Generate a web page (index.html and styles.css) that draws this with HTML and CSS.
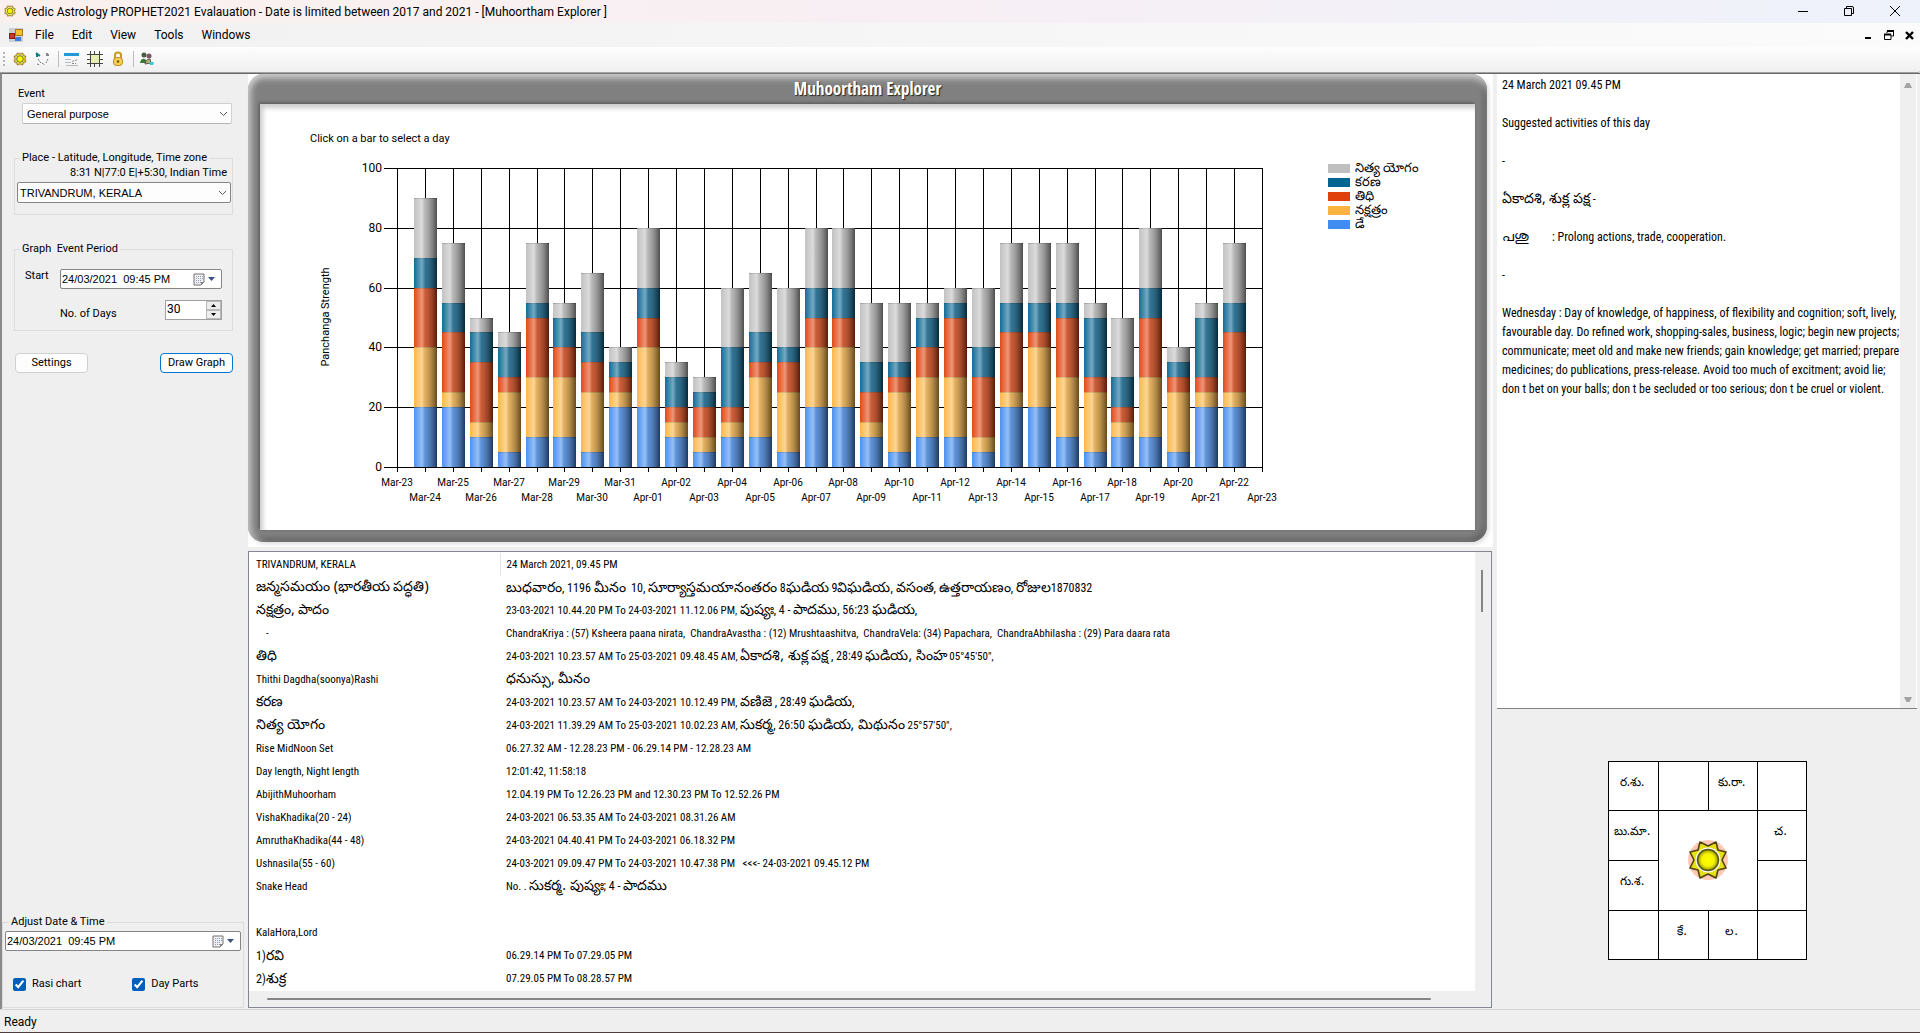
FILE: index.html
```html
<!DOCTYPE html>
<html lang="en">
<head>
<meta charset="utf-8">
<title>Vedic Astrology PROPHET2021 Evalauation</title>
<link rel="stylesheet" href="styles.css">
</head>
<body>
<svg class="defs" width="0" height="0" aria-hidden="true">
  <defs>
    <radialGradient id="sunCore"><stop offset="0" stop-color="#ffff00"/><stop offset="0.6" stop-color="#f6f200"/><stop offset="1" stop-color="#8c8c00"/></radialGradient>
    <symbol id="sun" viewBox="0 0 48 48">
      <circle cx="24" cy="24" r="20" fill="#fdc9b4"/>
      <path d="M16 6 L24 10 L32 6 L34 14 L42 16 L38 24 L42 32 L34 34 L32 42 L24 38 L16 42 L14 34 L6 32 L10 24 L6 16 L14 14 Z" fill="#e6df14" stroke="#4e4410" stroke-width="1.6" stroke-linejoin="round"/>
      <circle cx="24" cy="24" r="12.5" fill="#fff"/>
      <circle cx="24" cy="24" r="10.5" fill="url(#sunCore)" stroke="#57570a" stroke-width="1.5"/>
    </symbol>
    <symbol id="calendar" viewBox="0 0 12 13">
      <path d="M1 1H11V9L8 12H1Z" fill="#eef0f5" stroke="#77706c"/>
      <path d="M8 12V9H11Z" fill="#8a8482"/>
      <path d="M3 3.500H10M3 5.500H10M3 7.500H9M3 9.500H8" stroke="#8f9bb5" stroke-dasharray="1 1"/>
    </symbol>
    <symbol id="chevron" viewBox="0 0 9 6"><path d="M1 1 L4.500 4.500 L8 1" fill="none" stroke="#555"/></symbol>
  </defs>
</svg>

<header>
  <div class="titlebar">
    <svg width="14" height="14"><use href="#sun"/></svg>
    <h1>Vedic Astrology PROPHET2021 Evalauation - Date is limited between 2017 and 2021 - [Muhoortham Explorer ]</h1>
    <div class="window-buttons">
      <button type="button" aria-label="Minimize"><svg width="12" height="12"><path d="M1 6.500H11" stroke="#000"/></svg></button>
      <button type="button" aria-label="Restore"><svg width="12" height="12"><path d="M1.500 3.500H8.500V10.500H1.500ZM3.500 3V1.500H9Q10.500 1.500 10.500 3V8.500H9" fill="none" stroke="#000"/></svg></button>
      <button type="button" aria-label="Close"><svg width="12" height="12"><path d="M1 1L11 11M11 1L1 11" stroke="#000"/></svg></button>
    </div>
  </div>
  <nav class="menubar">
    <svg width="14" height="14"><rect width="14" height="14" fill="#c9cdd4"/><rect x="0.500" y="5.500" width="5" height="5" fill="#c23a2b" stroke="#8b1a10"/><rect x="6.500" y="1.500" width="7" height="6" fill="#f7c02e" stroke="#a8781a"/><rect x="6" y="9" width="6" height="4" fill="#3d7be0"/></svg>
    <button type="button">File</button>
    <button type="button">Edit</button>
    <button type="button">View</button>
    <button type="button">Tools</button>
    <button type="button">Windows</button>
    <div class="child-buttons">
      <button type="button" aria-label="Minimize child"><svg width="9" height="9"><rect x="1" y="6" width="6" height="2"/></svg></button>
      <button type="button" aria-label="Restore child"><svg width="10" height="10"><path d="M3 3V1.500H9.500V6H7.500M0.500 4.500H7V9.500H0.500Z" fill="none" stroke="#000"/><path d="M3 1H10M0 4.500H7" stroke="#000" stroke-width="2"/></svg></button>
      <button type="button" aria-label="Close child"><svg width="9" height="9"><path d="M1 1L8 8M8 1L1 8" stroke="#000" stroke-width="2.400"/></svg></button>
    </div>
  </nav>
  <div class="toolbar">
    <span class="grip"></span>
    <button type="button" aria-label="Chart"><svg width="16" height="16"><use href="#sun"/></svg></button>
    <button type="button" aria-label="Match"><svg width="16" height="16"><path d="M1 2L5 5M2 2V6" stroke="#0d7d7d" stroke-width="2"/><path d="M12 2V5M14 4H11" stroke="#888" stroke-width="2"/><path d="M3 8L6 12M13 8L11 12M2 13L5 14M7 12L10 14" fill="none" stroke="#777" stroke-dasharray="2 1"/></svg></button>
    <span class="sep"></span>
    <button type="button" aria-label="List"><svg width="16" height="16"><rect y="2" width="15" height="3" fill="#1e9ad6"/><path d="M1 8.500H7M1 11.500H7M2 14.500H14" stroke="#b6bcc2"/><path d="M8 10.500L14 8.500M8 12.500H12" stroke="#888" stroke-dasharray="2 1"/></svg></button>
    <button type="button" aria-label="Grid"><svg width="16" height="16"><rect x="4" y="4" width="8" height="8" fill="#e6efae"/><path d="M3.500 0V16M7.500 0V4M7.500 12V16M12.500 0V16M0 3.500H16M0 8.500H4M12 8.500H16M0 12.500H16" stroke="#444"/></svg></button>
    <button type="button" aria-label="Lock"><svg width="16" height="16"><path d="M5 8V4Q5 1.500 8 1.500T11 4V8" fill="none" stroke="#c99a1e" stroke-width="2"/><rect x="3.500" y="6.500" width="9" height="8" rx="3" fill="#f5cd55" stroke="#b98a1c"/><circle cx="8" cy="10.500" r="1.300" fill="#7a5506"/></svg></button>
    <span class="sep"></span>
    <button type="button" aria-label="People"><svg width="16" height="16"><circle cx="5" cy="4" r="2.500" fill="#4b5a48"/><path d="M1 12Q2 7 6 8L9 12Z" fill="#357a35"/><circle cx="10" cy="5" r="2.500" fill="#7a5560"/><path d="M6 13Q7 8 11 8L12 12Z" fill="#b9b06a" stroke="#555"/><path d="M10 11H15L14 14H11Z" fill="#38c6d6"/></svg></button>
  </div>
</header>

<main>
  <form class="sidebar">
    <label class="event-label" for="event">Event</label>
    <div class="picker event">
      <select id="event"><option>General purpose</option></select>
      <svg width="9" height="6"><use href="#chevron"/></svg>
    </div>

    <fieldset class="group place">
      <legend>Place - Latitude, Longitude, Time zone</legend>
      <label for="place">8:31 N|77:0 E|+5:30, Indian Time</label>
      <div class="picker strong">
        <select id="place"><option>TRIVANDRUM, KERALA</option></select>
        <svg width="9" height="6"><use href="#chevron"/></svg>
      </div>
    </fieldset>

    <fieldset class="group period">
      <legend>Graph&nbsp; Event Period</legend>
      <div class="period-fields">
        <div class="line">
          <label for="start">Start</label>
          <div class="date">
            <input id="start" type="text" value="24/03/2021  09:45 PM">
            <svg width="12" height="13"><use href="#calendar"/></svg>
            <svg width="7" height="4"><path d="M0 0H7L3.500 4Z" fill="#3c5088"/></svg>
          </div>
        </div>
        <div class="line days">
          <label for="days">No. of Days</label>
          <div class="spinner">
            <input id="days" type="text" value="30">
            <div class="arrows">
              <button type="button" aria-label="More"><svg width="5" height="3"><path d="M0 3H5L2.500 0Z"/></svg></button>
              <button type="button" aria-label="Less"><svg width="5" height="3"><path d="M0 0H5L2.500 3Z"/></svg></button>
            </div>
          </div>
        </div>
      </div>
    </fieldset>

    <div class="actions">
      <button type="button">Settings</button>
      <button type="button" class="primary">Draw Graph</button>
    </div>

    <fieldset class="group adjust">
      <legend>Adjust Date &amp; Time</legend>
      <div class="date">
        <input type="text" value="24/03/2021  09:45 PM" aria-label="Adjust date and time">
        <svg width="12" height="13"><use href="#calendar"/></svg>
        <svg width="7" height="4"><path d="M0 0H7L3.500 4Z" fill="#3c5088"/></svg>
      </div>
      <div class="checks">
        <label><input type="checkbox" checked>Rasi chart</label>
        <label><input type="checkbox" checked>Day Parts</label>
      </div>
    </fieldset>
  </form>

  <section class="center">
    <div class="chart-wrap">
      <div class="chart-frame">
        <h2>Muhoortham Explorer</h2>
        <div class="chart-body"><svg id="chart" viewBox="0 0 1215 426" role="img" aria-label="Panchanga Strength"></svg></div>
      </div>
    </div>
    <div class="grid-box">
      <div class="rows">
        <table>
          <tr><td>TRIVANDRUM, KERALA</td><td>24 March 2021, 09.45 PM</td></tr>
          <tr><td><span class="te">జన్మసమయం (భారతీయ పద్ధతి)</span></td><td class="mix"><span class="te">బుధవారం</span>, 1196 <span class="te">మీనం</span>&nbsp; 10, <span class="te">సూర్యాస్తమయానంతరం</span> 8<span class="te">ఘడియ</span> 9<span class="te">విఘడియ</span>, <span class="te">వసంత</span>, <span class="te">ఉత్తరాయణం</span>, <span class="te">రోజుల</span>1870832</td></tr>
          <tr><td><span class="te">నక్షత్రం, పాదం</span></td><td>23-03-2021 10.44.20 PM To 24-03-2021 11.12.06 PM, <span class="mix"><span class="te">పుష్యః</span>, 4 - <span class="te">పాదము</span>, 56:23 <span class="te">ఘడియ</span>,</span></td></tr>
          <tr><td>&nbsp; &nbsp; -</td><td>ChandraKriya : (57) Ksheera paana nirata,&nbsp; ChandraAvastha : (12) Mrushtaashitva,&nbsp; ChandraVela: (34) Papachara,&nbsp; ChandraAbhilasha : (29) Para daara rata</td></tr>
          <tr><td><span class="te">తిధి</span></td><td>24-03-2021 10.23.57 AM To 25-03-2021 09.48.45 AM, <span class="mix"><span class="te">ఏకాదశి, శుక్ల పక్ష</span> , 28:49 <span class="te">ఘడియ, సింహ</span></span> 05°45'50",</td></tr>
          <tr><td>Thithi Dagdha(soonya)Rashi</td><td><span class="te">ధనుస్సు, మీనం</span></td></tr>
          <tr><td><span class="te">కరణ</span></td><td>24-03-2021 10.23.57 AM To 24-03-2021 10.12.49 PM, <span class="mix"><span class="te">వణిజె</span> , 28:49 <span class="te">ఘడియ</span>,</span></td></tr>
          <tr><td><span class="te">నిత్య యోగం</span></td><td>24-03-2021 11.39.29 AM To 25-03-2021 10.02.23 AM, <span class="mix"><span class="te">సుకర్మ</span>, 26:50 <span class="te">ఘడియ, మిథునం</span></span> 25°57'50",</td></tr>
          <tr><td>Rise MidNoon Set</td><td>06.27.32 AM - 12.28.23 PM - 06.29.14 PM - 12.28.23 AM</td></tr>
          <tr><td>Day length, Night length</td><td>12:01:42, 11:58:18</td></tr>
          <tr><td>AbijithMuhoorham</td><td>12.04.19 PM To 12.26.23 PM and 12.30.23 PM To 12.52.26 PM</td></tr>
          <tr><td>VishaKhadika(20 - 24)</td><td>24-03-2021 06.53.35 AM To 24-03-2021 08.31.26 AM</td></tr>
          <tr><td>AmruthaKhadika(44 - 48)</td><td>24-03-2021 04.40.41 PM To 24-03-2021 06.18.32 PM</td></tr>
          <tr><td>Ushnasila(55 - 60)</td><td>24-03-2021 09.09.47 PM To 24-03-2021 10.47.38 PM&nbsp;&nbsp; &lt;&lt;&lt;- 24-03-2021 09.45.12 PM</td></tr>
          <tr><td>Snake Head</td><td>No. . <span class="mix"><span class="te">సుకర్మ. పుష్యః</span>; 4 - <span class="te">పాదము</span></span></td></tr>
          <tr><td></td><td></td></tr>
          <tr><td>KalaHora,Lord</td><td></td></tr>
          <tr><td class="mix">1)<span class="te">రవి</span></td><td>06.29.14 PM To 07.29.05 PM</td></tr>
          <tr><td class="mix">2)<span class="te">శుక్ర</span></td><td>07.29.05 PM To 08.28.57 PM</td></tr>
        </table>
        <div class="vbar"><span></span></div>
      </div>
      <div class="hbar"><span></span></div>
    </div>
  </section>

  <aside class="right">
    <div class="notes">
      <div class="notes-text">
        <p>24 March 2021 09.45 PM</p>
        <p>Suggested activities of this day</p>
        <p>-</p>
        <p><span class="te">ఏకాదశి, శుక్ల పక్ష</span> -</p>
        <p><span class="te ml">പശു</span>: Prolong actions, trade, cooperation.</p>
        <p>-</p>
        <p>Wednesday : Day of knowledge, of happiness, of flexibility and cognition; soft, lively,<br>favourable day. Do refined work, shopping-sales, business, logic; begin new projects;<br>communicate; meet old and make new friends; gain knowledge; get married; prepare<br>medicines; do publications, press-release. Avoid too much of excitment; avoid lie;<br>don t bet on your balls; don t be secluded or too serious; don t be cruel or violent.</p>
      </div>
      <div class="notes-bar">
        <svg width="8" height="6"><path d="M0 6L2.500 1H5.500L8 6Z" fill="#a3a3a3"/></svg>
        <svg width="8" height="6"><path d="M0 0L2.500 5H5.500L8 0Z" fill="#a3a3a3"/></svg>
      </div>
    </div>
    <div class="rasi-area">
      <div class="rasi">
        <div>ర.శు.</div><div></div><div>కు.రా.</div><div></div>
        <div>బు.మా.</div><div class="hub"><svg width="48" height="48"><use href="#sun"/></svg></div><div>చ.</div>
        <div>గు.శ.</div><div></div>
        <div></div><div>కే.</div><div>ల.</div><div></div>
      </div>
    </div>
  </aside>
</main>

<footer>Ready</footer>
<script src="chart.js"></script>
</body>
</html>
```
FILE: chart.js
```js
// Points per day, bottom to top: weekday, nakshatra, tithi, karana, yoga.
const days = [
  [20,20,20,10,20],[20,5,20,10,20],[10,5,20,10,5],[5,20,5,10,5],[10,20,20,5,20],
  [10,20,10,10,5],[5,20,10,10,20],[20,5,5,5,5],[20,20,10,10,20],[10,5,5,10,5],
  [5,5,10,5,5],[10,5,5,20,20],[10,20,5,10,20],[5,20,10,5,20],[20,20,10,10,20],
  [20,20,10,10,20],[10,5,10,10,20],[5,20,5,5,20],[10,20,10,10,5],[10,20,20,5,5],
  [5,5,20,10,20],[20,5,20,10,20],[20,20,5,10,20],[10,20,20,5,20],[5,20,5,20,5],
  [10,5,5,10,20],[10,20,20,10,20],[5,20,5,5,5],[20,5,5,20,5],[20,5,20,10,20]
];
const series = [
  { name: "డే", color: "#418cf0" },
  { name: "నక్షత్రం", color: "#fcb441" },
  { name: "తిధి", color: "#e0400a" },
  { name: "కరణ", color: "#056492" },
  { name: "నిత్య యోగం", color: "#bfbfbf" }
];
const left = 137, top0 = 64, base = 363, step = 27.9;
const yOf = v => Math.round(base - v * (base - top0) / 100);
const xOf = i => Math.round(left + i * step);
let out = '<defs><linearGradient id="shade"><stop offset="0" stop-color="#fff" stop-opacity="0.05"/>' +
  '<stop offset="0.35" stop-color="#fff" stop-opacity="0.45"/><stop offset="0.5" stop-color="#999" stop-opacity="0.3"/>' +
  '<stop offset="1" stop-color="#000" stop-opacity="0.6"/></linearGradient></defs>';

for (let v = 0; v <= 100; v += 20) {
  out += `<rect x="124" y="${yOf(v)}" width="${xOf(31) - 123}" height="1"/>` +
    `<text class="y-label" x="122" y="${yOf(v) + 4}">${v}</text>`;
}
for (let i = 0; i <= 31; i++) {
  const label = i < 9 ? "Mar-" + (23 + i) : "Apr-" + String(i - 8).padStart(2, "0");
  out += `<rect x="${xOf(i)}" y="${top0}" width="1" height="${base - top0 + 5}"/>` +
    `<text class="x-label" x="${xOf(i)}" y="${i % 2 ? 397 : 382}">${label}</text>`;
}
days.forEach((parts, d) => {
  const x = xOf(d + 1) - 11;
  let sum = 0;
  parts.forEach((p, s) => {
    const y = yOf(sum + p), h = yOf(sum) - y;
    out += `<rect x="${x}" y="${y}" width="23" height="${h}" fill="${series[s].color}"/>` +
      `<rect x="${x}" y="${y}" width="23" height="1" fill="#000" opacity="0.2"/>`;
    sum += p;
  });
  out += `<rect x="${x}" y="${yOf(sum)}" width="23" height="${base - yOf(sum)}" fill="url(#shade)"/>`;
});
series.slice().reverse().forEach((s, i) => {
  const y = 60 + i * 14;
  out += `<rect x="1068" y="${y}" width="22" height="9" fill="${s.color}"/>` +
    `<text class="key" x="1095" y="${y + 8}">${s.name}</text>`;
});
out += '<text class="note" x="50" y="38">Click on a bar to select a day</text>' +
  '<text class="axis" transform="rotate(-90 69 213)" x="69" y="213">Panchanga Strength</text>';
document.getElementById("chart").innerHTML = out;
```
FILE: styles.css
```css
* { box-sizing: border-box; }
body { margin: 0; height: 100vh; min-height: 900px; display: flex; flex-direction: column; background: #efefef; color: #000; font: 11px/14px Roboto, "Noto Sans", sans-serif; }
button, input, select { font: inherit; color: inherit; margin: 0; padding: 0; }
svg { display: block; flex: none; }
.defs { position: absolute; }

.titlebar { display: flex; align-items: center; gap: 7px; height: 23px; padding: 0 19px 2px 3px; background: linear-gradient(90deg, #faf1ee, #f8eff4 45%, #eef2fb); }
.titlebar h1 { margin: 0; padding-top: 2px; font-size: 12px; font-weight: 400; }
.window-buttons { display: flex; gap: 34px; margin-left: auto; }
.titlebar button, .menubar button, .toolbar button { border: 0; background: none; }
.menubar { display: flex; align-items: center; height: 24px; padding: 0 6px 0 9px; font-size: 12px; background: linear-gradient(90deg, #f1f1f1, #fbfbfb); }
.menubar > button { margin-left: 18px; }
.menubar > svg + button { margin-left: 12px; }
.menubar .child-buttons { display: flex; align-items: center; gap: 11px; margin-left: auto; }
.toolbar { display: flex; align-items: center; height: 26px; gap: 7px; padding: 0 2px 1px 3px; background: linear-gradient(#fdfdfd, #f0f0f0); border-bottom: 1px solid #a0a0a0; border-radius: 0 0 2px 0; }
.grip { width: 2px; height: 15px; background: repeating-linear-gradient(#b5b5b5 0 2px, transparent 2px 4px); }
.sep { width: 1px; height: 16px; margin: 0 -2px 0 0; background: #bdbdbd; }

main { flex: 1; min-height: 0; display: flex; border-top: 1px solid #696969; border-left: 2px solid #8a8a8a; }

.sidebar { flex: 0 0 246px; display: flex; flex-direction: column; padding: 13px 4px 1px 0; }
.event-label { margin: 0 0 2px 16px; }
.picker { position: relative; height: 21px; font-family: "Liberation Sans", sans-serif; }
.picker select { width: 100%; height: 100%; padding: 0 4px; border: 1px solid #d0d0d0; border-bottom-color: #b5b5b5; border-radius: 2px; background: #fdfdfd; appearance: none; }
.picker svg { position: absolute; right: 4px; top: 8px; pointer-events: none; }
.picker.strong select { padding: 0 2px; border-color: #858585; }
.event { margin: 0 12px 0 20px; }
.group { min-width: 0; margin: 0; padding: 0; border: 1px solid #dcdcdc; }
.group legend { padding: 0 2px; }
.place { margin: 27px 11px 0 12px; padding: 1px 1px 11px 2px; }
.place legend { margin-left: 3px; }
.place label { display: block; margin: 0 4px 2px; text-align: right; }
.period { margin: 27px 11px 0 12px; }
.period legend { margin-left: 5px; }
.period-fields { padding: 13px 10px 9px; }
.line { display: flex; justify-content: space-between; }
.days { padding-left: 35px; margin-top: 11px; }
.days label { padding-top: 7px; }
.date { display: flex; align-items: center; gap: 3px; height: 20px; padding-right: 6px; border: 1px solid #858585; border-radius: 2px; background: #fff; font-family: "Liberation Sans", sans-serif; }
.line .date { width: 162px; }
.date input { flex: 1; min-width: 0; padding-left: 1px; border: 0; background: none; white-space: pre; }
.spinner { display: flex; width: 57px; height: 20px; border: 1px solid #a0a0a0; background: #fff; }
.spinner input { flex: 1; min-width: 0; padding: 0 1px 3px; border: 0; background: none; font-size: 12px; }
.arrows { display: grid; width: 15px; background: #fff; }
.arrows button { display: grid; place-items: center; border: 1px solid #b8b8b8; background: #ededed; }
.actions { display: flex; justify-content: space-between; margin: 22px 11px 0 13px; }
.actions button { width: 73px; height: 20px; border: 1px solid #d0d0d0; border-radius: 4px; background: #fdfdfd; }
.actions .primary { border-color: #0078d4; }
.adjust { margin-top: auto; padding: 2px 2px 16px; }
.adjust legend { margin-left: 4px; }
.checks { display: flex; gap: 51px; padding: 26px 8px 0; }
.checks label { display: flex; align-items: center; gap: 6px; }
.checks input { width: 13px; height: 13px; accent-color: #005fb8; }

.center { flex: 1; min-width: 0; display: flex; flex-direction: column; }
.chart-wrap { padding: 0 6px 5px 0; background: #fff; }
.chart-frame { padding: 0 12px 12px; border-radius: 16px; background: #808080; box-shadow: inset 0 7px 7px -3px #d0d0d0, inset 7px 0 7px -4px #c4c4c4, inset -4px -4px 5px #666, 2px 2px 4px #ddd; }
.chart-frame h2 { margin: 0; height: 30px; padding-top: 1px; text-align: center; font: 700 15px/28px "Open Sans Condensed", "Roboto Condensed", sans-serif; font-size: 17px; color: #fff; text-shadow: 1px 1px 1px #222; }
.chart-body { background: #fff; box-shadow: inset 3px 4px 5px #ccc, -1px -1px 3px #555; }
.chart-body svg { width: 100%; height: auto; }
.x-label { font-size: 10px; text-anchor: middle; }
.y-label { font-size: 12px; text-anchor: end; }
.key { font-size: 13px; }
.axis { text-anchor: middle; }

.grid-box { flex: 1; min-height: 0; display: flex; flex-direction: column; margin: 4px 1px 1px 0; border: 1px solid #828790; background: #efefef; font: 11px/22px "Roboto Condensed", "Noto Sans", sans-serif; }
.rows { flex: 1; min-height: 0; display: flex; overflow: hidden; background: #fff; }
table { flex: 1; align-self: flex-start; margin-top: 1px; table-layout: fixed; border-collapse: collapse; }
tr { height: 23px; }
td { height: 23px; padding: 0 0 0 6px; line-height: 22px; white-space: nowrap; overflow: hidden; }
td:first-child { width: 251px; padding-left: 7px; }
tr:first-child td:first-child { border-right: 1px solid #e3e3e3; }
.mix { font-size: 12px; }
.te { font-family: "Noto Sans", sans-serif; font-size: 14px; line-height: 16px; }
.vbar { width: 16px; padding: 18px 6px 0; background: #efefef; }
.vbar span { display: block; width: 2px; height: 42px; background: #858585; }
.hbar { height: 16px; padding: 7px 60px 0 18px; }
.hbar span { display: block; height: 2px; background: #858585; border-radius: 1px; }

.right { flex: 0 0 427px; display: flex; flex-direction: column; padding: 0 3px 0 4px; }
.notes { display: flex; flex: 0 1 635px; border-bottom: 1px solid #828282; background: #fff; }
.notes-text { flex: 1; padding: 2px 0 0 5px; font: 12px/19px "Roboto Condensed", "Noto Sans", sans-serif; white-space: nowrap; }
.notes p { margin: 0 0 19px; height: 19px; }
.ml { display: inline-block; width: 50px; }
.notes-bar { display: flex; flex-direction: column; justify-content: space-between; width: 17px; padding: 8px 4px 5px; background: #efefef; border-right: 1px solid #fff; }
.rasi-area { flex: 1; display: grid; place-items: center; padding-top: 2px; }
.rasi { display: grid; grid-template: 48px 49px 49px 48px / 49px 49px 48px 48px; gap: 1px; padding: 1px; background: #000; font: 12px/16px "Noto Sans", sans-serif; }
.rasi div { padding: 12px 2px 0 0; background: #fff; text-align: center; }
.rasi .hub { grid-area: 2 / 2 / 4 / 4; display: grid; place-items: center; padding: 0; }

footer { height: 24px; padding: 5px 4px 0; border-top: 1px solid #d5d5d5; border-bottom: 1px solid #4d3d3d; font-size: 12px; }
```
